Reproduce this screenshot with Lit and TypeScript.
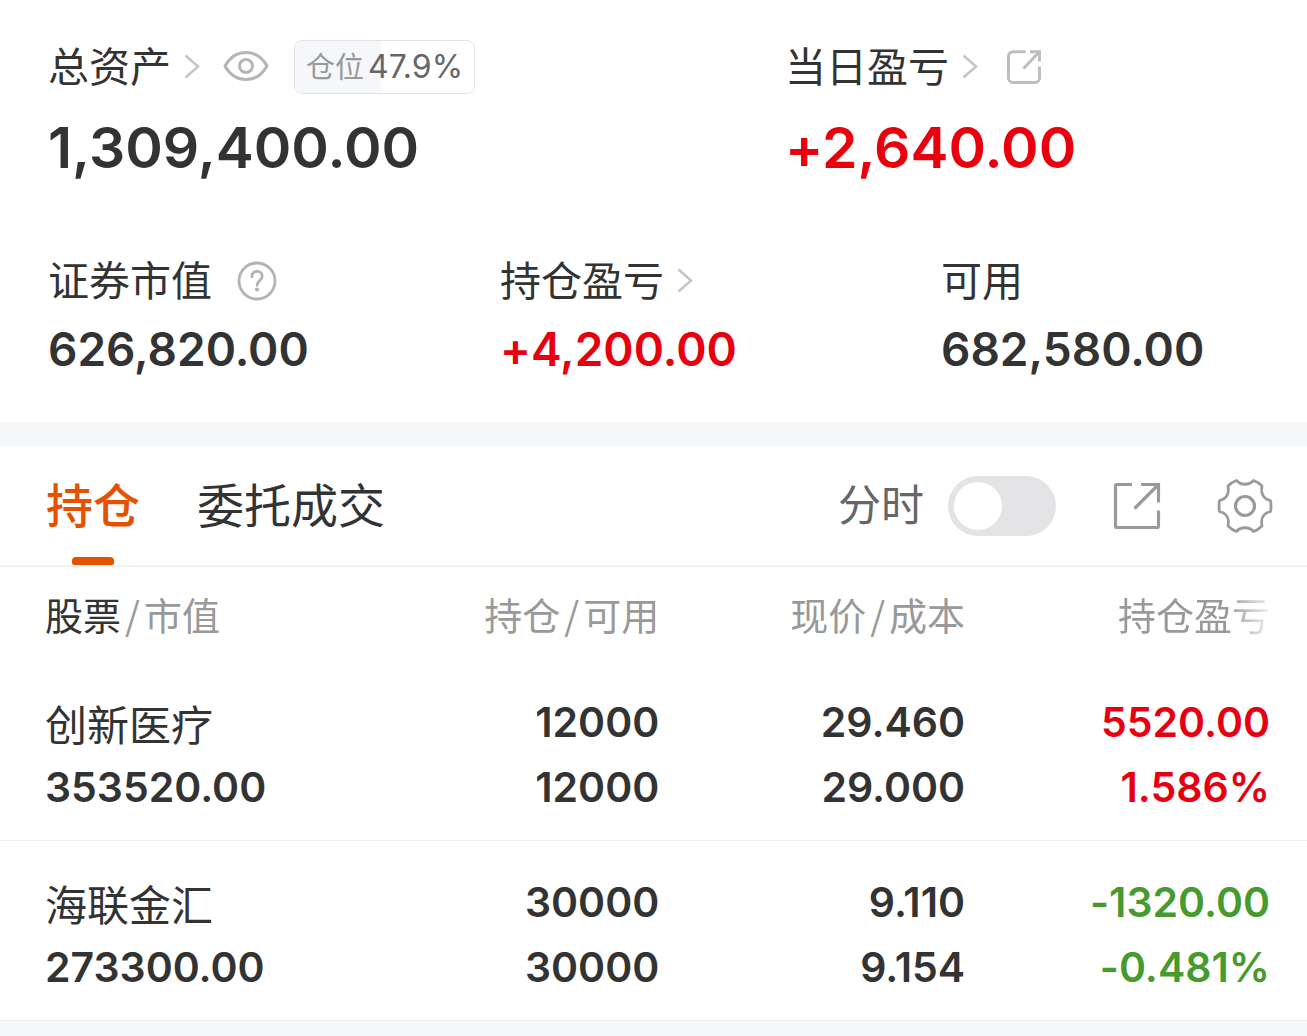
import { LitElement, html, css, nothing } from "lit";
import { customElement, property, state } from "lit/decorators.js";

type Trend = "up" | "down" | "flat";

interface Holding {
  name: string;
  value: string;
  amount: string;
  available: string;
  price: string;
  cost: string;
  profit: string;
  rate: string;
  trend: Trend;
}

const HOLDINGS: Holding[] = [
  {
    name: "创新医疗",
    value: "353520.00",
    amount: "12000",
    available: "12000",
    price: "29.460",
    cost: "29.000",
    profit: "5520.00",
    rate: "1.586%",
    trend: "up",
  },
  {
    name: "海联金汇",
    value: "273300.00",
    amount: "30000",
    available: "30000",
    price: "9.110",
    cost: "9.154",
    profit: "-1320.00",
    rate: "-0.481%",
    trend: "down",
  },
];

const chevronIcon = html`<svg class="icon" width="16" height="26" viewBox="0 0 16 26" aria-hidden="true">
  <path d="M1.500 1.500 14 12.500 1.500 23.500" fill="none" stroke="#c6c6c6" stroke-width="2.600" />
</svg>`;

const eyeIcon = html`<svg class="icon" width="46" height="34" viewBox="0 0 46 34" aria-hidden="true">
  <g fill="none" stroke="#b5b5b5" stroke-width="3">
    <path d="M2 16C7 7 14.500 2.500 23 2.500s16 4.500 21 13.500C39 25 31.500 29.500 23 29.500S7 25 2 16Z" stroke-linejoin="round" />
    <circle cx="23" cy="16" r="6.500" />
  </g>
</svg>`;

const helpIcon = html`<svg class="icon" width="40" height="40" viewBox="0 0 40 40" aria-hidden="true">
  <g fill="none" stroke="#b3b3b3" stroke-width="2.800">
    <circle cx="20" cy="20" r="18" />
    <path d="M14.800 15.800c0-3.400 2.200-5.400 5.200-5.400s5.200 2 5.200 4.900c0 4.200-5.200 4.500-5.200 9" stroke-linecap="round" />
  </g>
  <circle cx="20" cy="28.500" r="2.100" fill="#b3b3b3" />
</svg>`;

const shareSmallIcon = html`<svg class="icon" width="36" height="36" viewBox="0 0 36 36" aria-hidden="true">
  <g fill="none" stroke="#bdbdbd" stroke-width="3">
    <path d="M19.500 2.800H7a4.500 4.500 0 0 0-4.500 4.500V29a4.500 4.500 0 0 0 4.500 4.500h22a4.500 4.500 0 0 0 4.500-4.500V17.500" />
    <path d="M24 2.800h9.500V12.500M33 3.300 17.500 19.500" />
  </g>
</svg>`;

const shareLargeIcon = html`<svg class="icon" width="48" height="48" viewBox="0 0 48 48" aria-hidden="true">
  <g fill="none" stroke="#9a9a9a" stroke-width="3.200">
    <path d="M19 2.500H4A1.500 1.500 0 0 0 2.500 4v40A1.500 1.500 0 0 0 4 45.500h40a1.500 1.500 0 0 0 1.500-1.500V28.500" />
    <path d="M28 2.500h17.500v18M45 3 21.500 26.500" />
  </g>
</svg>`;

const gearIcon = html`<svg class="icon" width="56" height="56" viewBox="0 0 56 56" aria-hidden="true">
  <g fill="none" stroke="#9a9a9a" stroke-width="2.800" stroke-linejoin="round">
    <path
      d="M19.500 2.500C24 7.500 32 7.500 36.500 2.500Q41 4 45 8C43.500 15.500 46.500 21 53.500 22.500Q54.500 28 53.500 33.500C46.500 35 43.500 40.500 45 48Q41 52 36.500 53.500C32 48.500 24 48.500 19.500 53.500Q15 52 11 48C12.500 40.500 9.500 35 2.500 33.500Q1.500 28 2.500 22.500C9.500 21 12.500 15.500 11 8Q15 4 19.500 2.500Z"
    />
    <circle cx="28" cy="28" r="9.500" stroke-width="3.200" />
  </g>
</svg>`;

const resetStyles = css`
  button {
    display: inline-flex;
    align-items: center;
    margin: 0;
    padding: 0;
    border: 0;
    background: none;
    color: inherit;
    font: inherit;
    cursor: pointer;
  }
  .icon {
    display: block;
    flex: none;
  }
`;

@customElement("position-badge")
export class PositionBadge extends LitElement {
  @property({ type: Number }) percent = 0;

  static styles = css`
    :host {
      display: block;
    }
    .badge {
      position: relative;
      display: flex;
      align-items: center;
      gap: 4px;
      height: 52px;
      padding: 0 11px;
      border: 1px solid #e3e3e5;
      border-radius: 8px;
      overflow: hidden;
      white-space: nowrap;
    }
    .fill {
      position: absolute;
      inset: 0 auto 0 0;
      background: #f6f7fa;
    }
    .label {
      position: relative;
      font-size: 29px;
      color: #999;
    }
    .number {
      position: relative;
      font-size: 32px;
      color: #666;
    }
  `;

  render() {
    return html`<div class="badge">
      <div class="fill" style="width:${this.percent}%"></div>
      <span class="label">仓位</span>
      <span class="number">${this.percent}%</span>
    </div>`;
  }
}

@customElement("asset-summary")
export class AssetSummary extends LitElement {
  @state() private concealed = false;

  static styles = [
    resetStyles,
    css`
      :host {
        display: block;
        background: #fff;
      }
      .summary {
        display: grid;
        gap: 73px;
        padding: 39px 0 45px 48px;
      }
      .row {
        display: grid;
      }
      .row-main {
        grid-template-columns: 737fr 522fr;
      }
      .row-sub {
        grid-template-columns: 452fr 441fr 366fr;
      }
      .label {
        display: flex;
        align-items: center;
        height: 56px;
        font-size: 41px;
        line-height: 1;
        white-space: nowrap;
      }
      .link {
        gap: 13px;
      }
      .eye {
        margin: 0 25px 0 23px;
      }
      .share {
        margin-left: 28px;
      }
      .help {
        margin-left: 25px;
      }
      .value {
        font-weight: 600;
        white-space: nowrap;
      }
      .row-main .value {
        margin-top: 21px;
        font-size: 57px;
        line-height: 64px;
      }
      .row-sub .value {
        margin-top: 12px;
        font-size: 46px;
        line-height: 56px;
      }
      .up {
        color: #e9000f;
      }
    `,
  ];

  private show(value: string) {
    return this.concealed ? "****" : value;
  }

  render() {
    return html`<section class="summary">
      <div class="row row-main">
        <div>
          <div class="label">
            <button class="link">总资产${chevronIcon}</button>
            <button class="eye" aria-label="隐藏金额" @click=${() => (this.concealed = !this.concealed)}>
              ${eyeIcon}
            </button>
            <position-badge .percent=${47.9}></position-badge>
          </div>
          <div class="value">${this.show("1,309,400.00")}</div>
        </div>
        <div>
          <div class="label">
            <button class="link">当日盈亏${chevronIcon}</button>
            <button class="share" aria-label="分享">${shareSmallIcon}</button>
          </div>
          <div class="value up">${this.show("+2,640.00")}</div>
        </div>
      </div>
      <div class="row row-sub">
        <div>
          <div class="label">证券市值<button class="help" aria-label="说明">${helpIcon}</button></div>
          <div class="value">${this.show("626,820.00")}</div>
        </div>
        <div>
          <div class="label"><button class="link">持仓盈亏${chevronIcon}</button></div>
          <div class="value up">${this.show("+4,200.00")}</div>
        </div>
        <div>
          <div class="label">可用</div>
          <div class="value">${this.show("682,580.00")}</div>
        </div>
      </div>
    </section>`;
  }
}

@customElement("holdings-toolbar")
export class HoldingsToolbar extends LitElement {
  @state() private active = 0;

  static styles = [
    resetStyles,
    css`
      :host {
        display: block;
      }
      .bar {
        display: flex;
        align-items: stretch;
        justify-content: space-between;
        height: 119px;
        padding: 0 34px 0 46px;
        border-bottom: 2px solid #f3f3f4;
        line-height: 1;
      }
      .tabs {
        display: flex;
        gap: 57px;
      }
      .tab {
        position: relative;
        font-size: 47px;
        white-space: nowrap;
      }
      .tab.active {
        color: #e65100;
        font-weight: 500;
      }
      .tab.active::after {
        content: "";
        position: absolute;
        bottom: 0;
        left: 50%;
        width: 42px;
        height: 8px;
        margin-left: -21px;
        border-radius: 4px 4px 2px 2px;
        background: #e65100;
      }
      .tools {
        display: flex;
        align-items: center;
      }
      .switch {
        display: flex;
        align-items: center;
        gap: 24px;
        margin-right: 57px;
        font-size: 43px;
        color: #666;
        white-space: nowrap;
      }
      .toggle {
        appearance: none;
        display: flex;
        align-items: center;
        width: 108px;
        height: 60px;
        margin: 0;
        padding: 6px;
        box-sizing: border-box;
        border-radius: 30px;
        background: #e4e4e6;
      }
      .toggle::before {
        content: "";
        width: 48px;
        height: 48px;
        border-radius: 50%;
        background: #fff;
      }
      .toggle:checked {
        justify-content: flex-end;
        background: #e65100;
      }
      .share {
        margin-right: 56px;
      }
    `,
  ];

  render() {
    return html`<div class="bar">
      <div class="tabs" role="tablist">
        ${["持仓", "委托成交"].map(
          (name, i) => html`<button
            class="tab ${i === this.active ? "active" : ""}"
            role="tab"
            aria-selected=${i === this.active}
            @click=${() => (this.active = i)}
          >${name}</button>`,
        )}
      </div>
      <div class="tools">
        <label class="switch" for="minute">分时<input class="toggle" id="minute" type="checkbox" /></label>
        <button class="share" aria-label="分享">${shareLargeIcon}</button>
        <button aria-label="设置">${gearIcon}</button>
      </div>
    </div>`;
  }
}

@customElement("holdings-table")
export class HoldingsTable extends LitElement {
  @property({ attribute: false }) rows: Holding[] = [];

  static styles = css`
    :host {
      display: block;
    }
    .table {
      width: 100%;
      table-layout: fixed;
      border-collapse: separate;
      border-spacing: 0;
    }
    .head {
      height: 94px;
      padding: 0;
      font-family: "Noto Sans CJK SC", sans-serif;
      font-size: 38px;
      font-weight: 400;
      line-height: 56px;
      color: #999;
      text-align: right;
      white-space: nowrap;
    }
    .caption {
      display: inline-flex;
      gap: 4px;
    }
    .strong {
      color: #333;
    }
    .cell {
      padding: 29px 0 20px;
      border-bottom: 1px solid #eeeeef;
      font-size: 41px;
      font-weight: 600;
      line-height: 65px;
      text-align: right;
      white-space: nowrap;
    }
    .first {
      width: 27%;
      padding-left: 45px;
      text-align: left;
    }
    .amount {
      width: 20%;
    }
    .price {
      width: 23.4%;
    }
    .last {
      padding-right: 37px;
    }
    .line {
      display: block;
    }
    .name {
      font-family: "Noto Sans CJK SC", sans-serif;
      font-size: 42px;
      font-weight: 400;
    }
    .fade {
      -webkit-mask-image: linear-gradient(to left, rgba(0, 0, 0, 0.15), #000 44px);
      mask-image: linear-gradient(to left, rgba(0, 0, 0, 0.15), #000 44px);
    }
    .up {
      color: #e60012;
    }
    .down {
      color: #479b2e;
    }
  `;

  private head(classes: string, a: string, b?: string) {
    return html`<th class="head ${classes}" scope="col">
      <span class="caption ${b ? "" : "fade"}"
        ><span class=${classes === "first" ? "strong" : ""}>${a}</span>${b
          ? html`<span>/</span><span>${b}</span>`
          : nothing}</span
      >
    </th>`;
  }

  render() {
    return html`<table class="table">
      <thead>
        <tr>
          ${this.head("first", "股票", "市值")} ${this.head("amount", "持仓", "可用")}
          ${this.head("price", "现价", "成本")} ${this.head("last", "持仓盈亏")}
        </tr>
      </thead>
      <tbody>
        ${this.rows.map(
          (r) => html`<tr>
            <td class="cell first"><span class="line name">${r.name}</span><span class="line">${r.value}</span></td>
            <td class="cell"><span class="line">${r.amount}</span><span class="line">${r.available}</span></td>
            <td class="cell"><span class="line">${r.price}</span><span class="line">${r.cost}</span></td>
            <td class="cell last ${r.trend}">
              <span class="line">${r.profit}</span><span class="line">${r.rate}</span>
            </td>
          </tr>`,
        )}
      </tbody>
    </table>`;
  }
}

@customElement("app-root")
export class AppRoot extends LitElement {
  static styles = css`
    :host {
      display: flex;
      flex-direction: column;
      gap: 24px;
      min-height: 100vh;
      background: #f6f7f9;
      color: #333;
      font-family: Inter, "Noto Sans CJK SC", sans-serif;
      font-feature-settings: "calt" 0;
    }
    .holdings {
      background: #fff;
    }
  `;

  render() {
    return html`<asset-summary></asset-summary>
      <main class="holdings">
        <holdings-toolbar></holdings-toolbar>
        <holdings-table .rows=${HOLDINGS}></holdings-table>
      </main>`;
  }
}
